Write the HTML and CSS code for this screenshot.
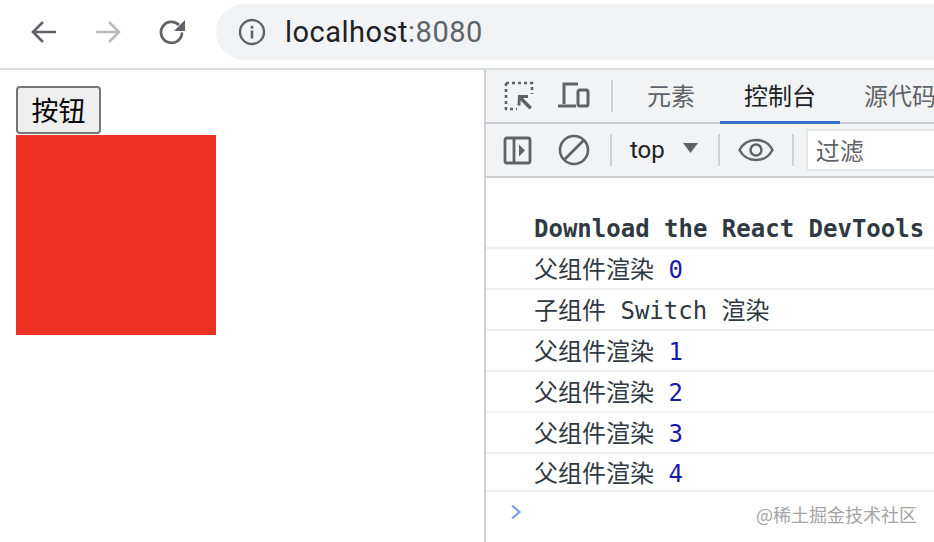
FILE: index.html
```html
<!DOCTYPE html>
<html lang="zh">
<head>
<meta charset="utf-8">
<title>localhost:8080</title>
<link rel="stylesheet" href="styles.css">
</head>
<body>
<header class="browser-bar">
  <svg class="nav-icon" width="30" height="30" viewBox="0 0 30 30"><path d="M27 15H4M14 5 4 15l10 10" fill="none" stroke="#5f6368" stroke-width="2.6"/></svg>
  <svg class="nav-icon" width="30" height="30" viewBox="0 0 30 30"><path d="M3 15h23M16 5l10 10-10 10" fill="none" stroke="#bababa" stroke-width="2.6"/></svg>
  <svg class="nav-icon" width="30" height="30" viewBox="0 0 30 30"><path d="M25 15.500a10.500 10.500 0 1 1-3-7.500" fill="none" stroke="#5f6368" stroke-width="2.800"/><path d="M28 3v11H17z" fill="#5f6368"/></svg>
  <div class="omnibox">
    <svg width="28" height="28" viewBox="0 0 28 28"><circle cx="14" cy="14" r="12" fill="none" stroke="#5f6368" stroke-width="2.400"/><rect x="12.700" y="12.500" width="2.600" height="8" fill="#5f6368"/><rect x="12.700" y="7.800" width="2.600" height="2.800" fill="#5f6368"/></svg>
    <span class="url">localhost<span class="port">:8080</span></span>
  </div>
</header>
<main class="split">
  <section class="page">
    <button class="demo-btn">按钮</button>
    <div class="red-box"></div>
  </section>
  <section class="devtools">
    <div class="tabs">
      <svg class="tool" width="32" height="32" viewBox="0 0 32 32"><path d="M3 3h26v11M3 3v26h11" fill="none" stroke="#5f6368" stroke-width="2.600" stroke-dasharray="3 3"/><path d="M15 15h10v3h-5l9 9-2.500 2.500-9-9v5h-3z" fill="#5f6368"/></svg>
      <svg class="tool tool-2" width="34" height="30" viewBox="0 0 34 30"><path d="M22 3H8v20M2 25h18" fill="none" stroke="#5f6368" stroke-width="3"/><rect x="22" y="9" width="10" height="16" rx="2" fill="none" stroke="#5f6368" stroke-width="3"/></svg>
      <span class="sep sep-tabs"></span>
      <span class="tab tab-first">元素</span>
      <span class="tab active">控制台</span>
      <span class="tab tab-last">源代码</span>
    </div>
    <div class="filters">
      <svg class="tool" width="30" height="30" viewBox="0 0 30 30"><rect x="2" y="3" width="25" height="25" rx="2" fill="none" stroke="#5f6368" stroke-width="2.800"/><path d="M11 3v25" stroke="#5f6368" stroke-width="2.800"/><path d="M16 9.500l6 6-6 6z" fill="#5f6368"/></svg>
      <svg class="tool tool-3" width="32" height="32" viewBox="0 0 32 32"><circle cx="16" cy="16" r="14" fill="none" stroke="#5f6368" stroke-width="2.600"/><path d="M6 26 26 6" stroke="#5f6368" stroke-width="2.600"/></svg>
      <span class="sep sep-a"></span>
      <span class="context">top</span>
      <svg class="caret" width="16" height="12" viewBox="0 0 16 12"><path d="M0 1h15L7.500 11z" fill="#5f6368"/></svg>
      <span class="sep sep-b"></span>
      <svg class="eye" width="36" height="24" viewBox="0 0 36 24"><path d="M1.500 12C5 5.500 11 2 18 2s13 3.500 16.500 10C31 18.500 25 22 18 22S5 18.500 1.500 12z" fill="none" stroke="#5f6368" stroke-width="2.400"/><circle cx="18" cy="12" r="5.500" fill="none" stroke="#5f6368" stroke-width="2.400"/></svg>
      <span class="sep sep-c"></span>
      <div class="filter-input">过滤</div>
    </div>
    <div class="console">
      <div class="row row-first"><strong>Download the React DevTools</strong></div>
      <div class="row">父组件渲染 <span class="num">0</span></div>
      <div class="row">子组件 Switch 渲染</div>
      <div class="row">父组件渲染 <span class="num">1</span></div>
      <div class="row">父组件渲染 <span class="num">2</span></div>
      <div class="row">父组件渲染 <span class="num">3</span></div>
      <div class="row row-last">父组件渲染 <span class="num">4</span></div>
      <div class="prompt">
        <svg width="12" height="16" viewBox="0 0 12 16"><path d="M2 1.500 9.500 8 2 14.500" fill="none" stroke="#7d9fe0" stroke-width="2.200"/></svg>
      </div>
    </div>
  </section>
</main>
<div class="watermark">@稀土掘金技术社区</div>
</body>
</html>
```
FILE: styles.css
```css
* { box-sizing: border-box; }
html, body { margin: 0; height: 542px; width: 934px; overflow: hidden; background: #fff; }
body { font-family: "Liberation Sans", "Noto Sans CJK SC", sans-serif; position: relative; }

.browser-bar {
  height: 70px;
  display: flex;
  align-items: center;
  border-bottom: 2px solid #dadce0;
  padding: 0 0 4px 29px;
}
.nav-icon { margin-right: 34px; flex: none; }
.nav-icon:nth-child(3) { margin-right: 29px; }
.omnibox {
  flex: 1;
  height: 56px;
  background: #f1f3f4;
  border-radius: 28px 0 0 28px;
  display: flex;
  align-items: center;
  padding-left: 22px;
  gap: 19px;
}
.url { font-size: 29px; color: #202124; font-family: "Roboto", "Liberation Sans", sans-serif; letter-spacing: 0.500px; }
.port { color: #5f6368; }

.split { display: flex; height: 472px; }
.page { width: 484px; flex: none; padding: 16px; }
.demo-btn {
  display: block;
  width: 85px;
  height: 48px;
  padding: 0 0 2px;
  background: #efefef;
  border: 2px solid #767676;
  border-radius: 4px;
  font-family: "Noto Sans CJK SC", sans-serif;
  font-size: 27px;
  color: #000;
}
.red-box { width: 200px; height: 200px; background: #ee3224; margin-top: 1px; }

.devtools { flex: 1; min-width: 0; border-left: 2px solid #cfd1d4; overflow: hidden; }
.tabs, .filters {
  display: flex;
  align-items: center;
  background: #f1f3f4;
  white-space: nowrap;
  padding-left: 17px;
}
.tabs { height: 54px; border-bottom: 2px solid #cbcdd0; }
.filters { height: 54px; border-bottom: 2px solid #cbcdd0; }
.tool { flex: none; }
.tool-2 { margin-left: 21px; }
.tool-3 { margin-left: 25px; }
.sep { width: 2px; height: 32px; background: #cfd1d4; flex: none; }
.sep-tabs { margin-left: 21px; }
.tab {
  font-family: "Noto Sans CJK SC", sans-serif;
  font-size: 24px;
  color: #5f6368;
  height: 54px;
  line-height: 50px;
  flex: none;
  border-bottom: 3px solid transparent;
  margin-bottom: -2px;
  width: 120px;
  text-align: center;
}
.tab-first { width: 107px; padding-left: 34px; text-align: left; }
.tab.active { color: #202124; border-bottom-color: #3f70cc; }
.tab-last { padding-left: 24px; width: 100px; text-align: left; }
.sep-a { margin-left: 20px; }
.context { font-size: 24px; color: #202124; margin-left: 18px; font-family: "Roboto", "Liberation Sans", sans-serif; }
.caret { margin-left: 18px; margin-top: -4px; flex: none; }
.sep-b { margin-left: 19px; }
.eye { margin-left: 18px; flex: none; }
.sep-c { margin-left: 18px; }
.filter-input {
  margin-left: 12px;
  flex: 1;
  height: 42px;
  background: #fff;
  border: 2px solid #e4e6e8;
  border-right: 0;
  padding-left: 8px;
  font-family: "Noto Sans CJK SC", sans-serif;
  font-size: 24px;
  line-height: 37px;
  color: #5f6368;
}

.console {
  font-family: "DejaVu Sans Mono", "Noto Sans CJK SC", monospace;
  font-size: 24px;
  color: #303942;
}
.row {
  height: 41px;
  line-height: 42px;
  padding-left: 48px;
  border-bottom: 2px solid #f0f0f0;
  white-space: pre;
}
.row-first { height: 71px; padding-top: 32px; line-height: 38px; }
.row-last { height: 38px; line-height: 41px; }
.num { color: #1a1aa6; }
.prompt { padding: 12px 0 0 24px; height: 40px; line-height: 0; }
.watermark {
  position: absolute;
  right: 17px;
  top: 502px;
  font-size: 18px;
  line-height: 24px;
  color: #a4a4a4;
  font-family: "Noto Sans CJK SC", sans-serif;
}
```
